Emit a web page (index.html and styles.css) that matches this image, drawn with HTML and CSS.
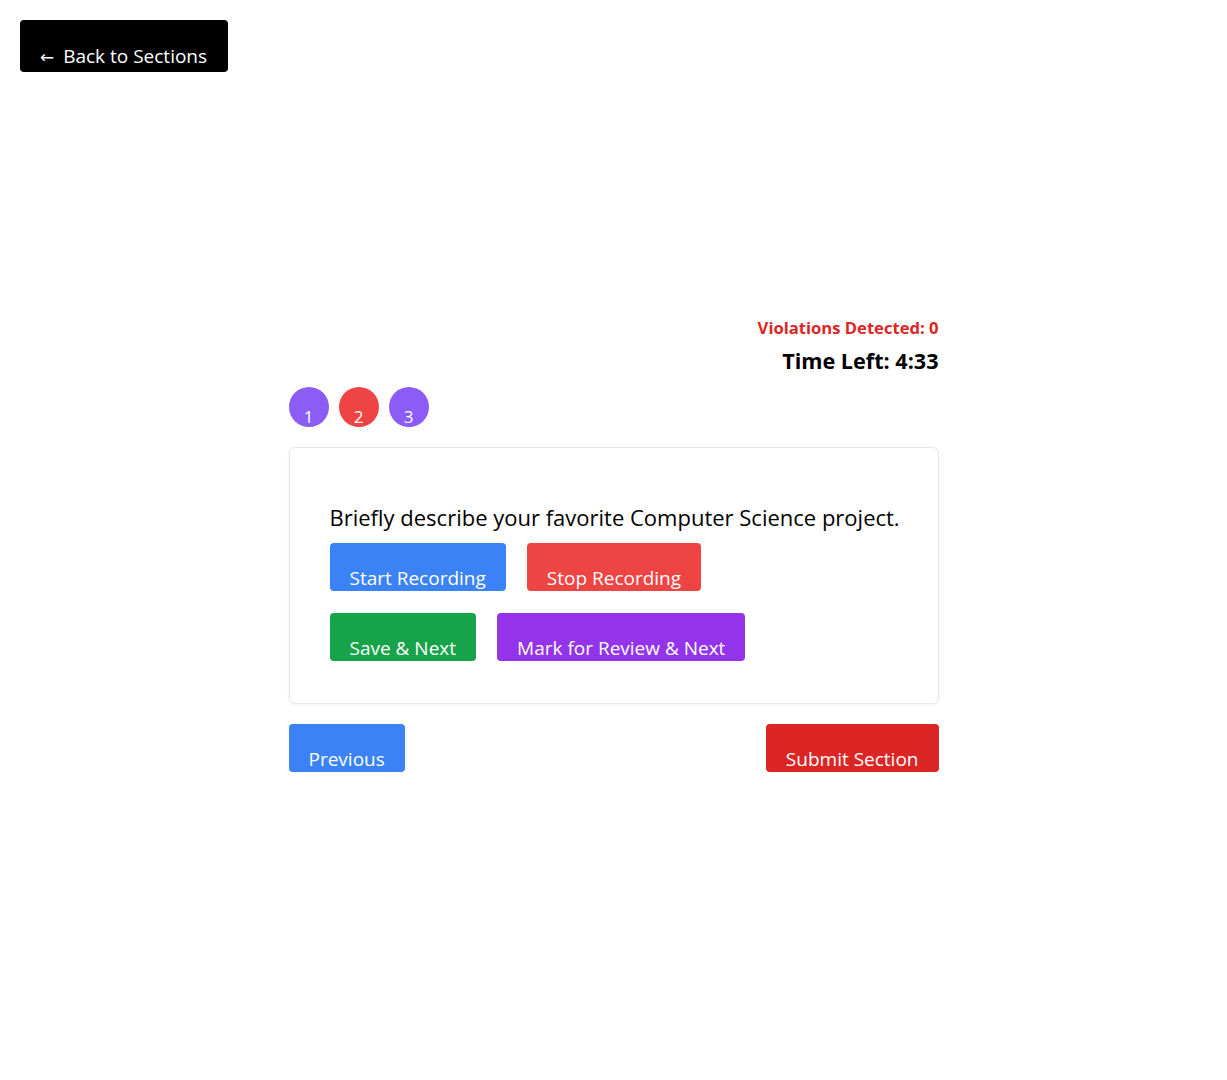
FILE: index.html
```html
<!DOCTYPE html>
<html>
<head>
<meta charset="utf-8">
<link rel="stylesheet" href="styles.css">
</head>
<body>
<button class="back"><span class="arrow">←</span> Back to Sections</button>
<main class="wrap">
  <div class="violations">Violations Detected: 0</div>
  <div class="timer">Time Left: 4:33</div>
  <div class="circles">
    <span class="circle purple">1</span>
    <span class="circle red">2</span>
    <span class="circle purple">3</span>
  </div>
  <section class="card">
    <p class="question">Briefly describe your favorite Computer Science project.</p>
    <div class="row">
      <button class="btn blue">Start Recording</button>
      <button class="btn red">Stop Recording</button>
    </div>
    <div class="row row2">
      <button class="btn green">Save &amp; Next</button>
      <button class="btn violet">Mark for Review &amp; Next</button>
    </div>
  </section>
  <div class="nav">
    <button class="btn blue">Previous</button>
    <button class="btn darkred">Submit Section</button>
  </div>
</main>
</body>
</html>
```

FILE: styles.css
```css
body {
  margin: 0;
  font-family: "Open Sans", "Noto Sans", sans-serif;
  color: #000;
  background: #fff;
}
button {
  font-family: inherit;
  border: none;
  cursor: pointer;
}
.back {
  display: block;
  margin: 20px 0 0 20px;
  height: 52px;
  padding: 21px 21px 0 20px;
  background: #000;
  color: #fff;
  font-size: 19px;
  line-height: 26px;
  border-radius: 4px;
  box-sizing: border-box;
}
.arrow {
  font-family: "DejaVu Sans", sans-serif;
  font-size: 17px;
  margin-right: 4px;
}
.wrap {
  width: 650px;
  margin: 246px auto 0;
}
.violations {
  text-align: right;
  color: #dc2626;
  font-weight: 700;
  font-size: 16.6px;
  line-height: 20px;
}
.timer {
  text-align: right;
  font-weight: 700;
  font-size: 21.6px;
  line-height: 28px;
  margin-top: 9px;
}
.circles {
  display: flex;
  gap: 10px;
  margin-top: 12px;
}
.circle {
  width: 40px;
  height: 40px;
  border-radius: 50%;
  color: #fff;
  font-size: 17px;
  line-height: 20px;
  box-sizing: border-box;
  padding-top: 20px;
  text-align: center;
}
.circle.purple { background: #8b5cf6; }
.circle.red { background: #ef4444; }
.card {
  margin-top: 20px;
  border: 1px solid #e5e7eb;
  border-radius: 6px;
  box-shadow: 0 1px 3px rgba(0,0,0,0.06);
  padding: 40px 40px 42px;
}
.question {
  margin: 15px 0 0;
  font-size: 22px;
  font-weight: 500;
  line-height: 28px;
  white-space: nowrap;
}
.row {
  display: flex;
  gap: 21px;
  margin-top: 12px;
}
.row2 { margin-top: 22px; }
.btn {
  height: 48px;
  padding: 22px 20px 0;
  font-size: 19px;
  line-height: 26px;
  color: #fff;
  border-radius: 4px;
  box-sizing: border-box;
}
.blue { background: #3b82f6; }
.red { background: #ef4444; }
.green { background: #16a34a; }
.violet { background: #9333ea; }
.darkred { background: #dc2626; }
.nav {
  display: flex;
  justify-content: space-between;
  margin-top: 20px;
}
```
